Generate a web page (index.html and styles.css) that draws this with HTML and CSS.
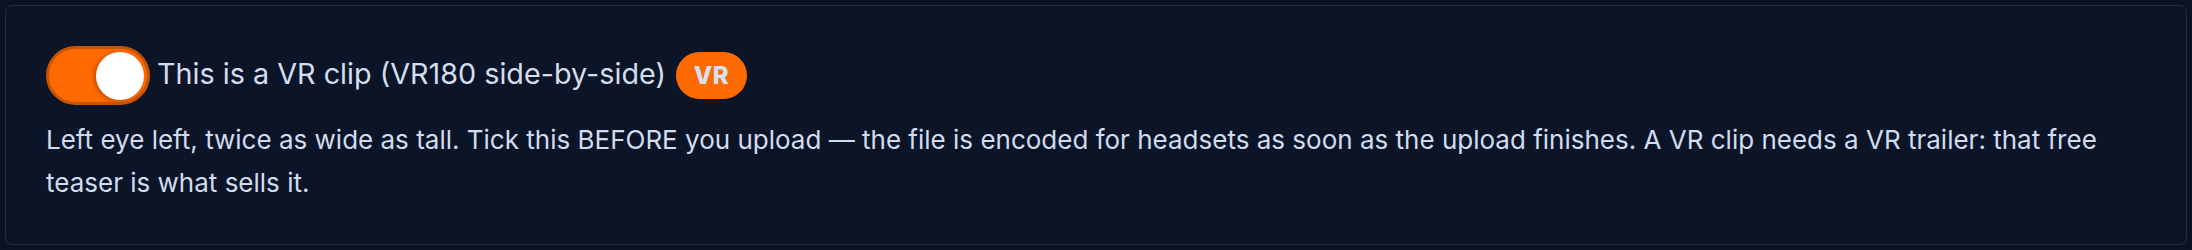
FILE: index.html
```html
<!DOCTYPE html>
<html lang="en">
<head>
<meta charset="utf-8">
<title>VR clip</title>
<link rel="stylesheet" href="styles.css">
</head>
<body>
<div class="card">
  <label class="row">
    <span class="switch"><span class="knob"></span></span>
    <span class="title">This is a VR clip (VR180 side-by-side)</span>
    <span class="badge">VR</span>
  </label>
  <p class="desc">Left eye left, twice as wide as tall. Tick this BEFORE you upload — the file is encoded for headsets as soon as the upload finishes. A VR clip needs a VR trailer: that free teaser is what sells it.</p>
</div>
</body>
</html>
```
FILE: styles.css
```css
html, body {
  margin: 0;
  background: #0b1323;
}
body {
  padding: 5px 5px 5px 5px;
  font-family: Inter, "Noto Sans", sans-serif;
  color: #d3deef;
}
.card {
  background: #0c1528;
  border: 1px solid #222d43;
  border-radius: 7px;
  padding: 40px 40px 40px 40px;
  height: 158px;
}
.row {
  display: flex;
  align-items: center;
  gap: 7px;
}
.switch {
  box-sizing: border-box;
  width: 104px;
  height: 59px;
  border-radius: 30px;
  background: #ff6a00;
  border: 3px solid #c95400;
  display: flex;
  align-items: center;
  justify-content: flex-end;
  padding-right: 3px;
  flex: none;
}
.knob {
  width: 48px;
  height: 48px;
  border-radius: 50%;
  background: #ffffff;
  box-shadow: -2px 1px 4px rgba(120, 40, 0, 0.45);
}
.title {
  font-size: 28.75px;
  line-height: 40px;
  color: #d3deef;
  margin-top: -4px;
}
.badge {
  margin-left: 3px;
  width: 71px;
  height: 47px;
  border-radius: 24px;
  background: #ff6a00;
  color: #d6e1f2;
  font-weight: 800;
  font-size: 24px;
  display: flex;
  align-items: center;
  justify-content: center;
  letter-spacing: 0.5px;
}
.desc {
  margin: 13px 0 0 0;
  font-size: 26px;
  line-height: 43px;
  color: #d1dcee;
}
```
